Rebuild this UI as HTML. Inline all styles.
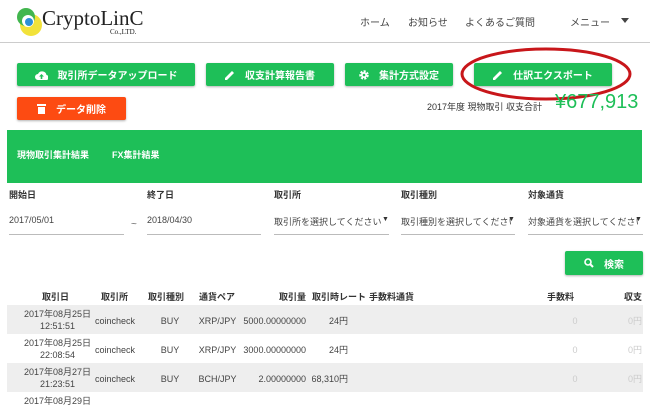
<!DOCTYPE html>
<html><head><meta charset="utf-8"><style>
*{margin:0;padding:0;box-sizing:border-box}
body{width:650px;height:402px;overflow:hidden;background:#fff;font-family:"Liberation Sans","Noto Sans CJK JP",sans-serif;color:#333;position:relative}
.a{position:absolute;white-space:nowrap}
.btn{position:absolute;height:23px;background:#1ebf58;color:#fff;font-size:10px;font-weight:bold;display:flex;align-items:center;justify-content:center;gap:10px;border-radius:2px;box-shadow:0 1px 2px rgba(0,0,0,.3);white-space:nowrap}
.lab{font-size:9px;font-weight:bold;top:188px}
.inp{position:absolute;top:212px;height:23px;border-bottom:1px solid #bbb;font-size:9px;color:#444;padding-top:3px;overflow:hidden;white-space:nowrap}
.th{position:absolute;top:290px;font-size:9px;font-weight:bold;white-space:nowrap}
.row{position:absolute;left:7px;width:636px;height:29px}
.c{position:absolute;font-size:9px;color:#444;text-align:center;line-height:12px;white-space:nowrap}
</style></head><body>
<div class="a" style="left:0;top:42px;width:650px;height:1px;background:#ccc"></div>
<svg class="a" style="left:13px;top:5px" width="34" height="32"><circle cx="18" cy="20" r="11" fill="#f2e23a"/><circle cx="13" cy="12" r="9" fill="#42b64e"/><circle cx="15" cy="16" r="6" fill="#fff"/><circle cx="16" cy="17" r="4" fill="#2d8fd8"/></svg>
<div class="a" style="left:42px;top:6px;font-family:'Liberation Serif',serif;font-size:21px;color:#222">CryptoLinC</div>
<div class="a" style="left:110px;top:28px;font-family:'Liberation Serif',serif;font-size:7px;color:#222">Co.,LTD.</div>
<div class="a" style="left:360px;top:14px;font-size:10px;color:#444">ホーム</div>
<div class="a" style="left:408px;top:14px;font-size:10px;color:#444">お知らせ</div>
<div class="a" style="left:465px;top:14px;font-size:10px;color:#444">よくあるご質問</div>
<div class="a" style="left:570px;top:14px;font-size:10px;color:#444">メニュー</div>
<svg class="a" style="left:621px;top:18px" width="8" height="5"><path d="M0 0H8L4 5Z" fill="#444"/></svg>

<div class="btn" style="left:17px;top:63px;width:178px"><svg width="13" height="10"><path d="M3 10a3 3 0 0 1 0-6a4.5 4.5 0 0 1 8.5 1a2.5 2.5 0 0 1-.5 5Z" fill="#fff"/><path d="M6.5 4L4 6.5h1.7V9h1.6V6.5H9Z" fill="#1ebf58"/></svg><span>取引所データアップロード</span></div>
<div class="btn" style="left:206px;top:63px;width:128px"><svg width="10" height="10"><path d="M0 10V8L7 1l2 2-7 7Z" fill="#fff"/></svg><span>収支計算報告書</span></div>
<div class="btn" style="left:345px;top:63px;width:108px"><svg width="10" height="10"><circle cx="5" cy="5" r="3.5" fill="none" stroke="#fff" stroke-width="2.5" stroke-dasharray="2 1.2"/><circle cx="5" cy="5" r="3" fill="#fff"/><circle cx="5" cy="5" r="1.3" fill="#1ebf58"/></svg><span>集計方式設定</span></div>
<div class="btn" style="left:474px;top:63px;width:138px"><svg width="10" height="10"><path d="M0 10V8L7 1l2 2-7 7Z" fill="#fff"/></svg><span>仕訳エクスポート</span></div>
<svg class="a" style="left:458px;top:46px" width="176" height="56"><ellipse cx="88" cy="28" rx="84" ry="25" fill="none" stroke="#c8161a" stroke-width="3"/></svg>
<div class="btn" style="left:17px;top:97px;width:109px;background:#fd4b12"><svg width="9" height="11"><rect x="0" y="1" width="9" height="2" fill="#fff"/><rect x="1" y="4" width="7" height="7" fill="#fff"/></svg><span>データ削除</span></div>
<div class="a" style="left:427px;top:100px;font-size:9px;color:#333">2017年度 現物取引 収支合計</div>
<div class="a" style="left:555px;top:91px;font-size:20px;color:#1ebf58">¥677,913</div>

<div class="a" style="left:7px;top:130px;width:635px;height:53px;background:#1ebf58"></div>
<div class="a" style="left:17px;top:148px;font-size:9px;font-weight:bold;color:#fff">現物取引集計結果</div>
<div class="a" style="left:112px;top:148px;font-size:9px;font-weight:bold;color:#fff">FX集計結果</div>

<div class="a lab" style="left:9px">開始日</div>
<div class="a lab" style="left:147px">終了日</div>
<div class="a lab" style="left:274px">取引所</div>
<div class="a lab" style="left:401px">取引種別</div>
<div class="a lab" style="left:528px">対象通貨</div>
<div class="inp" style="left:9px;width:115px">2017/05/01</div>
<div class="a" style="left:131px;top:219px;font-size:10px;color:#666">~</div>
<div class="inp" style="left:147px;width:114px">2018/04/30</div>
<div class="inp" style="left:274px;width:110px">取引所を選択してください</div>
<div class="inp" style="left:401px;width:110px">取引種別を選択してください</div>
<div class="inp" style="left:528px;width:110px">対象通貨を選択してください</div>
<div class="a" style="left:274px;top:234px;width:115px;height:1px;background:#bbb"></div>
<div class="a" style="left:401px;top:234px;width:114px;height:1px;background:#bbb"></div>
<div class="a" style="left:528px;top:234px;width:115px;height:1px;background:#bbb"></div>
<div class="a" style="left:382px;top:216px;font-size:7px">▼</div>
<div class="a" style="left:508px;top:216px;font-size:7px">▼</div>
<div class="a" style="left:635px;top:216px;font-size:7px">▼</div>

<div class="btn" style="left:565px;top:251px;width:78px;height:24px"><svg width="10" height="10"><circle cx="4" cy="4" r="3" fill="none" stroke="#fff" stroke-width="1.6"/><path d="M6 6l3 3" stroke="#fff" stroke-width="2"/></svg><span>検索</span></div>

<div class="th" style="left:42px">取引日</div>
<div class="th" style="left:101px">取引所</div>
<div class="th" style="left:148px">取引種別</div>
<div class="th" style="left:199px">通貨ペア</div>
<div class="th" style="left:279px">取引量</div>
<div class="th" style="left:312px">取引時レート</div>
<div class="th" style="left:369px">手数料通貨</div>
<div class="th" style="left:547px">手数料</div>
<div class="th" style="left:624px">収支</div>

<div class="row" style="top:305px;background:#eee"></div>
<div class="row" style="top:334px;background:#fff"></div>
<div class="row" style="top:363px;background:#eee"></div>

<div class="c" style="left:20px;top:308px;width:75px">2017年08月25日<br>12:51:51</div>
<div class="c" style="left:20px;top:337px;width:75px">2017年08月25日<br>22:08:54</div>
<div class="c" style="left:20px;top:366px;width:75px">2017年08月27日<br>21:23:51</div>
<div class="c" style="left:20px;top:395px;width:75px">2017年08月29日</div>

<div class="c" style="left:90px;top:315px;width:50px">coincheck</div>
<div class="c" style="left:90px;top:344px;width:50px">coincheck</div>
<div class="c" style="left:90px;top:373px;width:50px">coincheck</div>
<div class="c" style="left:150px;top:315px;width:40px">BUY</div>
<div class="c" style="left:150px;top:344px;width:40px">BUY</div>
<div class="c" style="left:150px;top:373px;width:40px">BUY</div>
<div class="c" style="left:195px;top:315px;width:45px">XRP/JPY</div>
<div class="c" style="left:195px;top:344px;width:45px">XRP/JPY</div>
<div class="c" style="left:195px;top:373px;width:45px">BCH/JPY</div>
<div class="c" style="left:236px;top:315px;width:70px;text-align:right">5000.00000000</div>
<div class="c" style="left:236px;top:344px;width:70px;text-align:right">3000.00000000</div>
<div class="c" style="left:236px;top:373px;width:70px;text-align:right">2.00000000</div>
<div class="c" style="left:300px;top:315px;width:48px;text-align:right">24円</div>
<div class="c" style="left:300px;top:344px;width:48px;text-align:right">24円</div>
<div class="c" style="left:300px;top:373px;width:48px;text-align:right">68,310円</div>
<div class="c" style="left:565px;top:315px;width:20px;color:#ccc">0</div>
<div class="c" style="left:565px;top:344px;width:20px;color:#ccc">0</div>
<div class="c" style="left:565px;top:373px;width:20px;color:#ccc">0</div>
<div class="c" style="left:612px;top:315px;width:30px;color:#ccc;text-align:right">0円</div>
<div class="c" style="left:612px;top:344px;width:30px;color:#ccc;text-align:right">0円</div>
<div class="c" style="left:612px;top:373px;width:30px;color:#ccc;text-align:right">0円</div>
</body></html>
